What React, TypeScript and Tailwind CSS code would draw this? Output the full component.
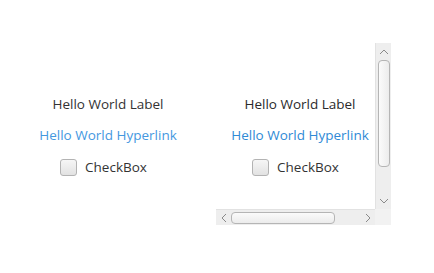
import React from "react";

const font = { fontFamily: '"Open Sans", "Liberation Sans", sans-serif' };

function Check() {
  return (
    <div className="flex items-center gap-[8px] pr-[9px]">
      <div className="w-[17px] h-[17px] rounded-[3px] border border-[#b3b3b3] bg-gradient-to-b from-[#f6f6f6] to-[#e2e2e2]" />
      <span className="text-[13.5px] leading-[17px] text-[#333]">CheckBox</span>
    </div>
  );
}

function Content({ bold }: { bold?: boolean }) {
  return (
    <div className="flex flex-col items-center">
      <div className={`text-[13.5px] leading-[17px] ${bold ? "font-medium text-[#2a2a2a]" : "text-[#333]"}`}>Hello World Label</div>
      <div className={`mt-[14px] text-[13.5px] leading-[17px] ${bold ? "font-medium text-[#2f8ad6]" : "text-[#4598df]"}`}>Hello World Hyperlink</div>
      <div className="mt-[15px]"><Check /></div>
    </div>
  );
}

function Chevron({ dir }: { dir: "up" | "down" | "left" | "right" }) {
  const d = {
    up: "M1 5 L5 1 L9 5",
    down: "M1 1 L5 5 L9 1",
    left: "M5 1 L1 5 L5 9",
    right: "M1 1 L5 5 L1 9",
  }[dir];
  const vert = dir === "up" || dir === "down";
  return (
    <svg width={vert ? 10 : 6} height={vert ? 6 : 10} viewBox={vert ? "0 0 10 6" : "0 0 6 10"}>
      <path d={d} fill="none" stroke="#8a8a8a" strokeWidth="1" />
    </svg>
  );
}

export default function App() {
  return (
    <div className="w-[434px] h-[273px] bg-white flex" style={font}>
      <div className="w-[216px] pt-[96px] flex justify-center">
        <Content />
      </div>
      <div className="mt-[43px] w-[175px] h-[182px] grid grid-cols-[159px_16px] grid-rows-[166px_16px]">
        <div className="pt-[53px] pl-[9px] flex justify-center overflow-hidden">
          <Content bold />
        </div>
        <div className="bg-[#eeeeee] border-l border-[#e2e2e2] flex flex-col items-center">
          <div className="h-[15px] flex items-center justify-center mt-[1px]"><Chevron dir="up" /></div>
          <div className="mt-[1px] w-[12px] h-[107px] rounded-[4px] border border-[#b5b5b5] bg-gradient-to-r from-[#fbfbfb] to-[#ececec]" />
          <div className="flex-1" />
          <div className="h-[15px] flex items-center justify-center mb-[1px]"><Chevron dir="down" /></div>
        </div>
        <div className="bg-[#eeeeee] border-t border-[#e2e2e2] flex items-center">
          <div className="w-[15px] flex items-center justify-center"><Chevron dir="left" /></div>
          <div className="w-[104px] h-[12px] rounded-[4px] border border-[#b5b5b5] bg-gradient-to-b from-[#fbfbfb] to-[#ececec]" />
          <div className="flex-1" />
          <div className="w-[15px] flex items-center justify-center"><Chevron dir="right" /></div>
        </div>
        <div className="bg-[#f2f2f2]" />
      </div>
    </div>
  );
}
